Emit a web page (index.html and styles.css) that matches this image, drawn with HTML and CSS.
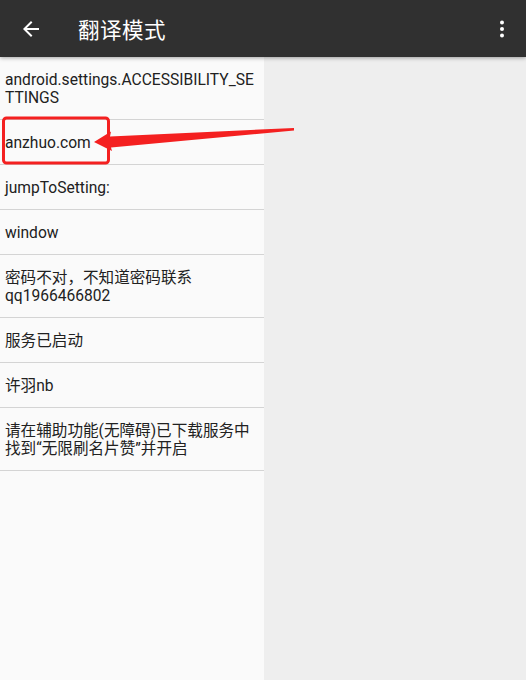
FILE: index.html
```html
<!DOCTYPE html>
<html lang="zh-CN">
<head>
    <meta charset="UTF-8">
    <meta name="viewport" content="width=device-width, initial-scale=1.0">
    <title>翻译模式</title>
    <link rel="stylesheet" href="styles.css">
</head>
<body>
    <div class="app">
        <!-- Toolbar -->
        <header class="toolbar">
            <svg class="back-icon" width="24" height="24" viewBox="0 0 24 24">
                <path d="M20 11H7.83l5.59-5.59L12 4l-8 8 8 8 1.41-1.41L7.83 13H20v-2z" fill="#ffffff"/>
            </svg>
            <h1 class="title">翻译模式</h1>
            <svg class="more-icon" width="24" height="24" viewBox="0 0 24 24">
                <circle cx="12" cy="5.5" r="2" fill="#ffffff"/>
                <circle cx="12" cy="12" r="2" fill="#ffffff"/>
                <circle cx="12" cy="18.5" r="2" fill="#ffffff"/>
            </svg>
        </header>

        <!-- Content -->
        <div class="content">
            <ul class="item-list">
                <li>android.settings.ACCESSIBILITY_SETTINGS</li>
                <li>anzhuo.com</li>
                <li>jumpToSetting:</li>
                <li>window</li>
                <li>密码不对，不知道密码联系 qq1966466802</li>
                <li>服务已启动</li>
                <li>许羽nb</li>
                <li>请在辅助功能(无障碍)已下载服务中找到“无限刷名片赞”并开启</li>
            </ul>
            <div class="side-pane"></div>
        </div>

        <!-- Annotation -->
        <svg class="annotation" width="526" height="680" viewBox="0 0 526 680">
            <rect x="3.5" y="118" width="105" height="45" rx="3" fill="none" stroke="#f42020" stroke-width="3"/>
            <polygon points="94,142 111,131.5 110,136.5 294,128 294,130.5 111,147.5 112,151" fill="#f42020"/>
        </svg>
    </div>
</body>
</html>
```

FILE: styles.css
```css
/* General Page Styling */
body {
    margin: 0;
    padding: 0;
    font-family: 'Roboto', 'Noto Sans CJK SC', sans-serif;
    background: #eeeeee;
}

.app {
    position: relative;
    height: 680px;
    display: flex;
    flex-direction: column;
    overflow: hidden;
}

/* Toolbar */
.toolbar {
    height: 57px;
    flex-shrink: 0;
    background: #303030;
    display: flex;
    align-items: center;
    padding: 0 12px 0 19px;
    box-shadow: 0 1px 4px rgba(0, 0, 0, 0.35);
    position: relative;
    z-index: 1;
}

.title {
    flex: 1;
    margin: 0 0 0 35px;
    font-size: 21.5px;
    font-weight: normal;
    color: #ffffff;
    letter-spacing: 0.5px;
}

/* Content */
.content {
    flex: 1;
    display: flex;
}

.item-list {
    width: 264px;
    margin: 0;
    padding: 0;
    list-style: none;
    background: #fafafa;
}

.item-list li {
    padding: 14px 5px 12px 5px;
    font-size: 15.6px;
    line-height: 18px;
    color: #212121;
    border-bottom: 1px solid #d4d4d4;
    overflow-wrap: anywhere;
}

.side-pane {
    flex: 1;
    background: #eeeeee;
}

/* Annotation overlay */
.annotation {
    position: absolute;
    left: 0;
    top: 0;
    pointer-events: none;
    z-index: 2;
}
```
